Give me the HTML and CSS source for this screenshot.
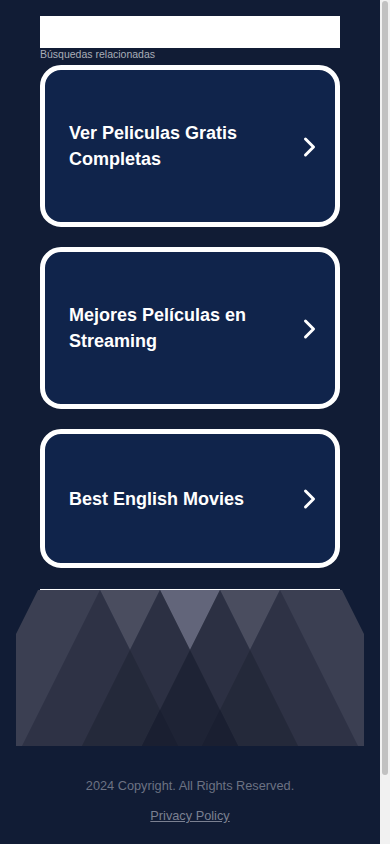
FILE: index.html
```html
<!DOCTYPE html>
<html lang="es">
<head>
<meta charset="utf-8">
<meta name="viewport" content="width=device-width, initial-scale=1">
<title>Búsquedas relacionadas</title>
<link rel="stylesheet" href="styles.css">
</head>
<body>
<div class="page">
  <div class="search-box"></div>
  <div class="label">Búsquedas relacionadas</div>
  <div class="cards">
    <a class="card" href="#">
      <span class="card-title">Ver Peliculas Gratis Completas</span>
      <svg class="chevron" viewBox="0 0 20 29" width="20" height="29" aria-hidden="true"><path d="M9.5 7 L17.5 15 L9.5 23" /></svg>
    </a>
    <a class="card" href="#">
      <span class="card-title">Mejores Películas en Streaming</span>
      <svg class="chevron" viewBox="0 0 20 29" width="20" height="29" aria-hidden="true"><path d="M9.5 7 L17.5 15 L9.5 23" /></svg>
    </a>
    <a class="card" href="#">
      <span class="card-title">Best English Movies</span>
      <svg class="chevron" viewBox="0 0 20 29" width="20" height="29" aria-hidden="true"><path d="M9.5 7 L17.5 15 L9.5 23" /></svg>
    </a>
  </div>
  <div class="divider"></div>
  <div class="hero">
    <svg viewBox="0 0 348 156" width="348" height="156" aria-hidden="true">
      <polygon points="22,0 326,0 348,44 348,156 0,156 0,44" fill="#3b3f52"/>
      <polygon points="84,0 144,0 114,60" fill="#4a4d5f"/>
      <polygon points="144,0 204,0 174,60" fill="#62657a"/>
      <polygon points="204,0 264,0 234,60" fill="#4a4d5f"/>
      <polygon points="84,0 6,156 162,156" fill="#2e3245"/>
      <polygon points="264,0 186,156 342,156" fill="#2e3245"/>
      <polygon points="144,0 66,156 222,156" fill="#2c3043"/>
      <polygon points="204,0 126,156 282,156" fill="#2c3043"/>
      <polygon points="114,60 66,156 162,156" fill="#24293a"/>
      <polygon points="234,60 186,156 282,156" fill="#24293a"/>
      <polygon points="174,60 126,156 222,156" fill="#1e2335"/>
      <polygon points="144,120 126,156 162,156" fill="#1a1f31"/>
      <polygon points="204,120 186,156 222,156" fill="#1a1f31"/>
    </svg>
  </div>
  <footer class="footer">
    <div class="copyright">2024 Copyright. All Rights Reserved.</div>
    <a class="privacy" href="#">Privacy Policy</a>
  </footer>
</div>
<div class="scrollbar" aria-hidden="true"><div class="scrollbar-thumb"></div></div>
</body>
</html>
```
FILE: styles.css
```css
html {
  background: #111c35;
}

body {
  margin: 0 10px 0 0;
  background: #111c35;
  font-family: "Liberation Sans", Arial, sans-serif;
}

.page {
  width: 300px;
  margin: 0 auto;
  padding-top: 16px;
  display: flex;
  flex-direction: column;
}

.search-box {
  height: 32px;
  background: #ffffff;
}

.label {
  font-size: 10.5px;
  line-height: 13px;
  color: #a9aeb8;
  margin-bottom: 4px;
}

.cards {
  display: flex;
  flex-direction: column;
  gap: 20px;
}

.card {
  display: flex;
  align-items: center;
  justify-content: space-between;
  border: 5px solid #ffffff;
  border-radius: 21px;
  background: #10244b;
  padding: 50px 19px 50px 24px;
  text-decoration: none;
  color: #ffffff;
}

.card-title {
  font-size: 18px;
  font-weight: 700;
  line-height: 26px;
  max-width: 210px;
}

.chevron {
  flex: none;
  display: block;
}

.chevron path {
  fill: none;
  stroke: #ffffff;
  stroke-width: 3;
  stroke-linecap: round;
  stroke-linejoin: round;
}

.divider {
  margin-top: 21px;
  height: 1px;
  background: #ffffff;
}

.hero {
  margin: 0 -24px;
  height: 156px;
}

.hero svg {
  display: block;
}

.footer {
  display: flex;
  flex-direction: column;
  align-items: center;
  gap: 12px;
  padding: 31px 0 62px;
  font-size: 12.75px;
  line-height: 18px;
}

.copyright {
  color: #6c7283;
}

.privacy {
  color: #7b8091;
  text-decoration: underline;
}

.scrollbar {
  position: fixed;
  top: 0;
  right: 0;
  bottom: 0;
  width: 10px;
  background: #f1f1f1;
}

.scrollbar-thumb {
  position: absolute;
  top: 1px;
  left: 2px;
  width: 6px;
  height: 774px;
  background: #c1c1c1;
  border-radius: 3px;
}
```
